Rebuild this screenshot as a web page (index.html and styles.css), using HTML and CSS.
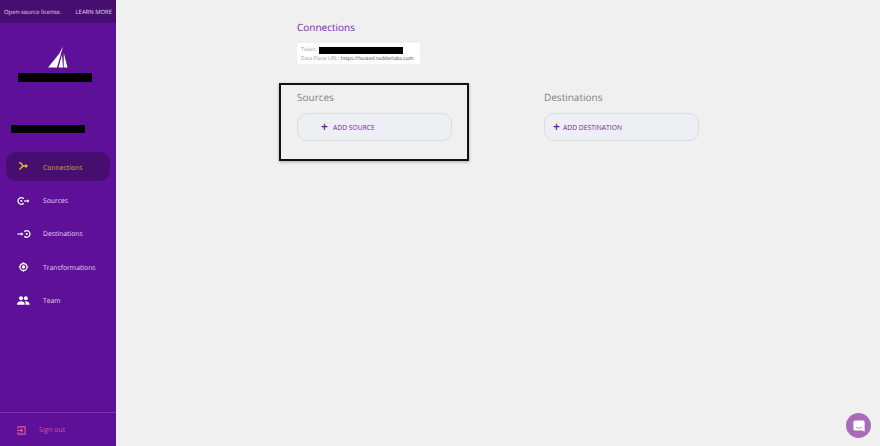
FILE: index.html
```html
<!DOCTYPE html>
<html lang="en">
<head>
<meta charset="utf-8">
<title>Connections</title>
<link rel="stylesheet" href="styles.css">
</head>
<body>
<div class="app">
  <aside class="sidebar">
    <div class="banner"><span>Open-source license.</span><span>LEARN MORE</span></div>
    <div class="logo">
      <svg class="logo-mark" width="20" height="22" viewBox="0 0 20 22"><path d="M0 21.500 L11 8 L15 0.500 L9 21.500Z M10.500 21.500 L14 8.500 L15 21.500Z M15.700 21.500 L15.800 7 L19.500 21.500Z" fill="#fff"/></svg>
      <div class="redact logo-redact"></div>
    </div>
    <div class="redact workspace"></div>
    <nav class="nav">
      <a class="item active">
        <svg class="ico" width="14" height="14" viewBox="0 0 14 14"><path d="M2 2.800 H3.800 L6 6 H9 M2.500 9.500 L6 6" fill="none" stroke="#f3c61d" stroke-width="1.300"/><path d="M8.500 3.800 L11 6 L8.500 8.200Z" fill="#f3c61d"/></svg>
        <span>Connections</span>
      </a>
      <a class="item">
        <svg class="ico" width="14" height="14" viewBox="0 0 14 14"><path d="M6.700 4.700 A3.300 3.300 0 1 0 6.700 9.300" fill="none" stroke="#fff" stroke-width="1.300"/><circle cx="4.300" cy="7" r="1.100" fill="#fff"/><path d="M7 7 H10.500" fill="none" stroke="#fff" stroke-width="1.200"/><path d="M10.200 5.200 L12.500 7 L10.200 8.800Z" fill="#fff"/></svg>
        <span>Sources</span>
      </a>
      <a class="item">
        <svg class="ico" width="14" height="14" viewBox="0 0 14 14"><path d="M7.300 4.700 A3.300 3.300 0 1 1 7.300 9.300" fill="none" stroke="#fff" stroke-width="1.300"/><circle cx="9.700" cy="7" r="1.100" fill="#fff"/><path d="M0.500 7 H4.500" fill="none" stroke="#fff" stroke-width="1.200"/><path d="M4.200 5.200 L6.500 7 L4.200 8.800Z" fill="#fff"/></svg>
        <span>Destinations</span>
      </a>
      <a class="item">
        <svg class="ico" width="14" height="14" viewBox="0 0 14 14"><circle cx="6.500" cy="7" r="3.500" fill="none" stroke="#fff" stroke-width="1.300"/><circle cx="6.500" cy="7" r="1.700" fill="#fff"/><path d="M6.500 2.300 V3.200 M6.500 10.800 V11.700 M1.800 7 H2.700 M10.300 7 H11.200" stroke="#fff" stroke-width="1"/></svg>
        <span>Transformations</span>
      </a>
      <a class="item">
        <svg class="ico" width="14" height="14" viewBox="0 0 14 14"><circle cx="4" cy="4.200" r="2" fill="#fff"/><circle cx="8.800" cy="4.200" r="2" fill="#fff"/><path d="M0 10.800 C0 8 2 7.200 4 7.200 C6 7.200 7.800 8 7.800 10.800Z M8.600 10.800 C8.600 9 8.300 8 7.700 7.300 C10 7 12.800 8 12.800 10.800Z" fill="#fff"/></svg>
        <span>Team</span>
      </a>
    </nav>
    <div class="signout">
      <svg class="signout-ico" width="9" height="9" viewBox="0 0 10 10"><path d="M1 3 V1 H9 V9 H1 V7 M0 5 H6 M4 3 L6.200 5 L4 7" fill="none" stroke="#e0559a" stroke-width="1.200"/></svg>
      <span>Sign out</span>
    </div>
  </aside>
  <main class="main">
    <h1 class="title">Connections</h1>
    <div class="keys">
      <div class="key-row"><span class="key-label">Token:</span><span class="redact token"></span></div>
      <div class="key-row"><span class="key-label">Data Plane URL:</span><span class="key-value">https://hosted.rudderlabs.com</span></div>
    </div>
    <div class="columns">
      <section class="col">
        <h2 class="col-title">Sources</h2>
        <button class="add add-source"><span class="plus">+</span>ADD SOURCE</button>
      </section>
      <section class="col">
        <h2 class="col-title">Destinations</h2>
        <button class="add add-dest"><span class="plus plus-tight">+</span>ADD DESTINATION</button>
      </section>
    </div>
    <div class="highlight"></div>
  </main>
</div>
<div class="chat">
  <svg width="16" height="16" viewBox="0 0 16 16"><path d="M2.500 0.500 H13.500 A2 2 0 0 1 15.500 2.500 V15.500 L12.500 14 H2.500 A2 2 0 0 1 0.500 12 V2.500 A2 2 0 0 1 2.500 0.500Z" fill="#fff"/><path d="M4 10 Q8 12 12 10" fill="none" stroke="#a96bb8" stroke-width="1"/></svg>
</div>
</body>
</html>
```
FILE: styles.css
```css
* { box-sizing: border-box; }
html, body { margin: 0; height: 100%; overflow: hidden; }
body { font-family: "Open Sans", "Noto Sans", sans-serif; background: #f0f0f0; text-rendering: geometricPrecision; }
.app { display: flex; height: 446px; }
.sidebar { width: 116px; flex: none; background: #5f1099; display: flex; flex-direction: column; color: #fff; }
.banner { height: 23px; background: #470e72; display: flex; justify-content: space-between; align-items: center; padding: 0 4px; font-size: 5.900px; color: #e0d3ea; white-space: nowrap; }
.redact { background: #000; }
.logo { display: flex; flex-direction: column; align-items: flex-start; padding: 23px 0 0 18px; }
.logo-mark { margin-left: 30px; }
.logo-redact { width: 74px; height: 9px; margin-top: 5px; }
.workspace { width: 74px; height: 8px; margin: 43px 0 0 11px; }
.nav { display: flex; flex-direction: column; gap: 4px; margin: 19px 6px 0; }
.item { height: 29.400px; display: flex; align-items: center; gap: 12px; padding: 1px 0 0 11px; font-size: 6.800px; color: #e5d6f0; border-radius: 10px; }
.item.active { background: #460f6f; color: #d9b030; }
.ico { flex: none; }
.signout { margin-top: auto; height: 34px; border-top: 1px solid #7a36a9; display: flex; align-items: center; gap: 13px; padding: 2px 0 0 17px; font-size: 6.900px; color: #c65aa8; }
.signout-ico { flex: none; }
.main { flex: 1; position: relative; padding: 19px 0 0 181px; }
.title { margin: 0; font-size: 10px; line-height: 16px; font-weight: 400; color: #7a24ad; }
.keys { width: 123px; height: 21px; margin-top: 8px; background: #fff; border-radius: 2px; padding: 3px 5px 0 4px; font-size: 5.100px; }
.key-row { display: flex; align-items: center; gap: 2px; height: 8.500px; white-space: nowrap; }
.key-label { color: #999; }
.key-value { color: #444; }
.token { width: 84px; height: 7px; }
.columns { display: flex; gap: 92px; margin-top: 25px; }
.col { width: 155px; }
.col-title { margin: 0; font-size: 10px; line-height: 16px; font-weight: 400; color: #808080; }
.add { width: 155px; height: 28px; margin-top: 8px; background: #eeeff4; border: 1px solid #dcdcdc; border-radius: 10px; display: flex; align-items: center; font-family: inherit; font-size: 6.750px; color: #6f2a9e; padding: 0; white-space: nowrap; }
.add-source { padding-left: 23px; }
.add-dest { padding-left: 8px; }
.plus { font-size: 12px; font-weight: 600; line-height: 12px; width: 12px; text-align: left; color: #5f1099; }
.plus-tight { width: 10px; }
.highlight { position: absolute; left: 163px; top: 83px; width: 190px; height: 78px; border: 2px solid #111; box-shadow: 0 1px 3px rgba(0,0,0,.3); }
.chat { position: fixed; left: 846px; top: 413px; width: 25px; height: 25px; border-radius: 50%; background: #a96bb8; display: flex; align-items: center; justify-content: center; }
.chat svg { width: 12px; height: 12px; }
```
